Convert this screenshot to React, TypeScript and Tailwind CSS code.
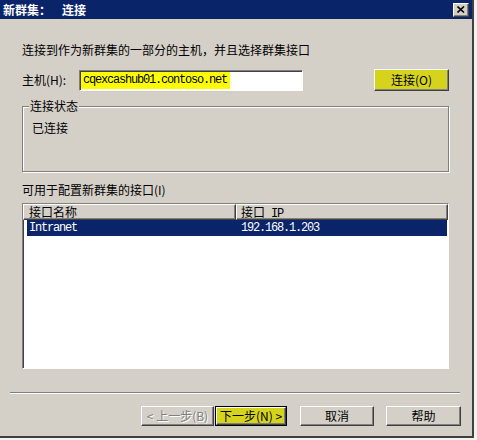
import React from 'react';

const raised = "border border-t-white border-l-white border-b-[#404040] border-r-[#404040] shadow-[inset_-1px_-1px_0_#808080]";
const sunken = "border border-t-[#808080] border-l-[#808080] border-b-white border-r-white shadow-[inset_1px_1px_0_#404040]";
const mono = "font-['Liberation_Mono',monospace] text-[12px] tracking-[-1.2px]";

export default function App() {
  return (
    <div className="w-[477px] h-[440px] bg-[#f2f2f2] font-['Noto_Sans_CJK_SC',sans-serif] text-[12px] text-black">
      <div className="w-[474px] h-[438px] bg-[#d4d0c8] border-r-2 border-b-2 border-[#404040] flex flex-col">
        {/* title bar */}
        <div className="h-[19px] bg-[#0a246a] flex items-center pl-[3px] pr-[3px]">
          <span className="text-white font-bold leading-none">新群集：</span>
          <span className="text-white font-bold leading-none ml-[11px]">连接</span>
          <div className={"ml-auto w-[16px] h-[14px] bg-[#d4d0c8] flex items-center justify-center " + raised}>
            <svg width="8" height="7" viewBox="0 0 8 7">
              <path d="M0.5 0.5 L7 6.5 M7 0.5 L0.5 6.5" stroke="#000" strokeWidth="1.6" />
            </svg>
          </div>
        </div>

        <div className="pl-[22px] pr-[23px]">
          <p className="mt-[23px] leading-[16px]">连接到作为新群集的一部分的主机，并且选择群集接口</p>

          <div className="mt-[11px] flex items-center h-[22px]">
            <span className="w-[57px] leading-[14px]">主机(H):</span>
            <div className={"w-[224px] h-[21px] bg-white flex items-center pl-[1px] " + sunken}>
              <span className={"bg-[#ffff00] h-[17px] leading-[17px] pl-[2px] pr-[3px] " + mono}>cqexcashub01.contoso.net</span>
            </div>
            <button className={"ml-auto w-[75px] h-[22px] bg-[#d6d31c] leading-none " + raised}>连接(O)</button>
          </div>

          <div className="mt-[15px] relative h-[66px] border border-[#808080] shadow-[inset_1px_1px_0_#fff,1px_1px_0_#fff] pl-[9px] pt-[14px]">
            <span className="absolute -top-[8px] left-[6px] px-[1px] bg-[#d4d0c8] leading-[14px]">连接状态</span>
            <p className="leading-[14px]">已连接</p>
          </div>

          <p className="mt-[11px] leading-[14px]">可用于配置新群集的接口(I)</p>

          <div className={"mt-[6px] h-[166px] bg-white flex flex-col " + sunken}>
            <div className="flex h-[16px] bg-[#d4d0c8]">
              <div className={"w-[213px] pl-[5px] leading-[13px] " + raised}>接口名称</div>
              <div className={"flex-1 pl-[4px] leading-[13px] flex items-baseline gap-[6px] " + raised}>
                <span>接口</span>
                <span className={mono}>IP</span>
              </div>
            </div>
            <div className="ml-[4px] mr-[1px] h-[16px] bg-[#0a246a] text-white flex items-center">
              <span className={"w-[209px] pl-[2px] " + mono}>Intranet</span>
              <span className={"pl-[5px] " + mono}>192.168.1.203</span>
            </div>
          </div>
        </div>

        <div className="mt-[23px] ml-[10px] mr-[12px] h-[2px] border-t border-t-[#808080] border-b border-b-white" />

        <div className="mt-[12px] flex justify-end pr-[11px] h-[20px]">
          <button className={"w-[73px] h-[20px] bg-[#d4d0c8] text-[#808080] [text-shadow:1px_1px_0_#fff] leading-none " + raised}>&lt; 上一步(B)</button>
          <div className="ml-[1px] w-[72px] h-[20px] border border-black">
            <button className={"w-full h-full bg-[#d6d31c] leading-none " + raised}>下一步(N) &gt;</button>
          </div>
          <button className={"ml-[13px] w-[74px] h-[20px] bg-[#d4d0c8] leading-none " + raised}>取消</button>
          <button className={"ml-[12px] w-[75px] h-[20px] bg-[#d4d0c8] leading-none " + raised}>帮助</button>
        </div>
      </div>
    </div>
  );
}
